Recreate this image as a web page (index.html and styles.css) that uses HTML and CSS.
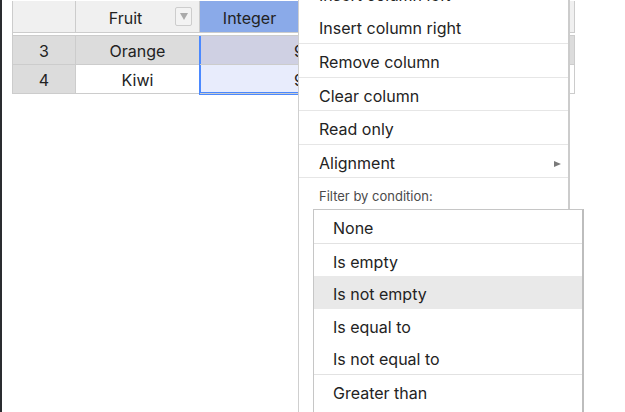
FILE: index.html
```html
<!DOCTYPE html>
<html>
<head>
<meta charset="utf-8">
<link rel="stylesheet" href="styles.css">
</head>
<body>
<div class="app">
  <div class="edge"></div>
  <div class="sheet">
    <div class="row head">
      <div class="cell corner"></div>
      <div class="cell hcell"><span class="hlabel">Fruit</span><span class="ddbtn"><span class="tri-down"></span></span></div>
      <div class="cell hcell hsel"><span class="hlabel">Integer</span><span class="ddbtn"><span class="tri-down"></span></span></div>
      <div class="cell hcell"></div>
    </div>
    <div class="spacer"></div>
    <div class="tbody">
      <div class="row cur">
        <div class="cell rh">3</div>
        <div class="cell txt">Orange</div>
        <div class="cell num sel">9</div>
        <div class="cell"></div>
      </div>
      <div class="row">
        <div class="cell rh">4</div>
        <div class="cell txt">Kiwi</div>
        <div class="cell num sel last">9</div>
        <div class="cell"></div>
      </div>
    </div>
  </div>

  <div class="menu">
    <div class="item">Insert column left</div>
    <div class="item">Insert column right</div>
    <div class="sep"></div>
    <div class="item">Remove column</div>
    <div class="sep"></div>
    <div class="item">Clear column</div>
    <div class="sep"></div>
    <div class="item">Read only</div>
    <div class="sep"></div>
    <div class="item sub"><span class="sublabel">Alignment</span><span class="tri-right"></span></div>
    <div class="sep"></div>
    <div class="label">Filter by condition:</div>
    <div class="dropdown">
      <div class="ditem">None</div>
      <div class="dsep"></div>
      <div class="ditem">Is empty</div>
      <div class="ditem hover">Is not empty</div>
      <div class="ditem">Is equal to</div>
      <div class="ditem">Is not equal to</div>
      <div class="dsep"></div>
      <div class="ditem">Greater than</div>
    </div>
  </div>
</div>
</body>
</html>
```

FILE: styles.css
```css
html, body {
  margin: 0;
  padding: 0;
  width: 625px;
  height: 412px;
  overflow: hidden;
  background: #ffffff;
}

body {
  font-family: Inter, "Liberation Sans", sans-serif;
  font-size: 16px;
  color: #222222;
}

.app {
  position: relative;
  display: flex;
  height: 412px;
}

.edge {
  width: 2px;
  height: 412px;
  background: #2a2c30;
  flex: none;
}

.sheet {
  margin-left: 10px;
  margin-top: 1px;
  align-self: flex-start;
  border-left: 1px solid #cccccc;
}

.row {
  display: grid;
  grid-template-columns: 63px 124px 124px 251px;
}

.cell {
  box-sizing: border-box;
  border-right: 1px solid #cccccc;
  border-bottom: 1px solid #cccccc;
  display: flex;
  align-items: center;
  justify-content: center;
  white-space: nowrap;
  overflow: hidden;
}

.head .cell {
  height: 32px;
  padding-top: 2px;
  background: #f0f0f0;
}

.hcell {
  justify-content: flex-start;
}

.hlabel {
  flex: 1;
  text-align: center;
}

.hsel {
  background: #8aaae9 !important;
}

.ddbtn {
  box-sizing: border-box;
  width: 17px;
  height: 19px;
  margin-right: 7px;
  margin-bottom: 2px;
  border: 1px solid #cdcdcd;
  border-radius: 2px;
  background: #f3f3f3;
  display: flex;
  align-items: center;
  justify-content: center;
}

.tri-down {
  width: 0;
  height: 0;
  border-left: 4.5px solid transparent;
  border-right: 4.5px solid transparent;
  border-top: 7px solid #aaaaaa;
}

.spacer {
  height: 2px;
  background: #ffffff;
}

.tbody {
  border-top: 1px solid #cccccc;
}

.tbody .cell {
  height: 29px;
  padding-top: 1px;
  background: #ffffff;
}

.tbody .rh {
  background: #dcdcdc;
}

.cur .cell {
  background: #dcdcdc;
}

.num {
  justify-content: flex-end;
  padding-right: 19px;
}

.tbody .sel {
  background: #e8ecfc;
  box-shadow: -1px 0 0 0 #4b89ff, inset 1px 0 0 0 #4b89ff;
}

.cur .sel {
  background: #cfd0e3;
}

.tbody .last {
  box-shadow: -1px 0 0 0 #4b89ff, inset 1px 0 0 0 #4b89ff, -1px 1px 0 0 #4b89ff, inset 0 -1px 0 0 #4b89ff;
}

/* context menu */
.menu {
  position: absolute;
  left: 298px;
  top: -23px;
  width: 272px;
  height: 480px;
  box-sizing: border-box;
  background: #ffffff;
  border-left: 1px solid #cfcfcf;
  border-right: 2px solid #cccccc;
}

.item {
  height: 33px;
  line-height: 37px;
  padding-left: 20px;
  color: #232323;
  white-space: nowrap;
}

.sep + .item {
  height: 32.5px;
}

.sep {
  height: 1px;
  background: #e6e6e6;
}

.sub {
  display: flex;
  justify-content: space-between;
  padding-right: 7px;
}

.tri-right {
  width: 0;
  height: 0;
  margin-top: 16px;
  border-top: 3.5px solid transparent;
  border-bottom: 3.5px solid transparent;
  border-left: 7px solid #7a7a7a;
}

.label {
  height: 31px;
  line-height: 36px;
  padding-left: 20px;
  font-size: 13px;
  color: #4a4a4a;
}

.dropdown {
  box-sizing: border-box;
  width: 271px;
  margin-left: 14px;
  padding-bottom: 30px;
  background: #ffffff;
  border-top: 1px solid #c6c6c6;
  border-left: 1px solid #c6c6c6;
  border-right: 2px solid #bdbdbd;
}

.ditem {
  height: 32.5px;
  line-height: 36.5px;
  padding-left: 19px;
  color: #232323;
  white-space: nowrap;
}

.ditem.hover {
  background: #e9e9e9;
}

.dsep {
  height: 1px;
  background: #e2e2e2;
}
```
